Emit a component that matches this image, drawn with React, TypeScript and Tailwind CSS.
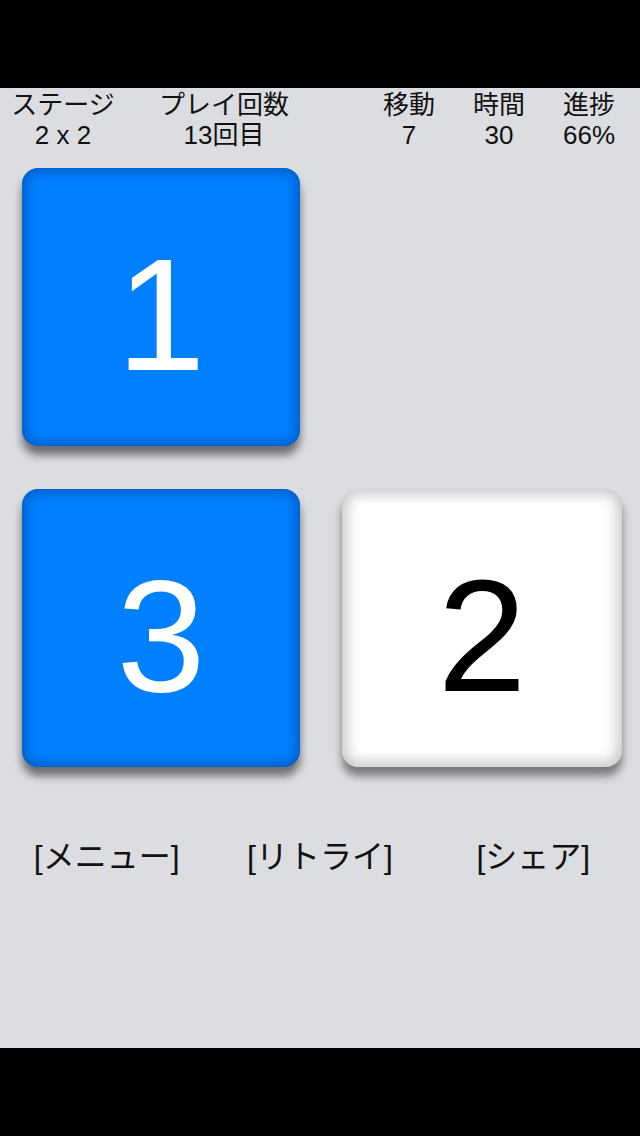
import React from "react";

const font = {
  fontFamily: '"Liberation Sans", "Noto Sans CJK JP", sans-serif',
};

type Stat = { label: string; value: string; width: string };

const stats: Stat[] = [
  { label: "ステージ", value: "2 x 2", width: "w-[126px]" },
  { label: "プレイ回数", value: "13回目", width: "w-[196px]" },
];

const stats2: Stat[] = [
  { label: "移動", value: "7", width: "w-[80px]" },
  { label: "時間", value: "30", width: "w-[80px]" },
  { label: "進捗", value: "66%", width: "w-[80px]" },
];

function StatCol({ s }: { s: Stat }) {
  return (
    <div className={`${s.width} flex flex-col items-center text-[26px] leading-[30px] text-[#111]`}>
      <span>{s.label}</span>
      <span>{s.value}</span>
    </div>
  );
}

function Tile({ n, blue }: { n: number; blue?: boolean }) {
  return (
    <div
      className={
        blue
          ? "w-[278px] h-[278px] rounded-[16px] bg-[#0080ff] text-white flex items-center justify-center pt-4 text-[160px] leading-none shadow-[inset_0_0_12px_4px_rgba(0,40,110,0.4),0_9px_9px_rgba(0,0,0,0.5)]"
          : "w-[280px] h-[278px] rounded-[16px] bg-white text-black flex items-center justify-center pt-4 text-[160px] leading-none shadow-[inset_0_0_14px_5px_rgba(0,0,0,0.22),0_9px_9px_rgba(0,0,0,0.45)]"
      }
    >
      {n}
    </div>
  );
}

export default function App() {
  return (
    <div className="w-[640px] h-[1136px] flex flex-col bg-black" style={font}>
      <div className="h-[88px] bg-black" />
      <main className="flex-1 bg-[#dcdde1] flex flex-col">
        <div className="flex pt-[2px]">
          {stats.map((s) => (
            <StatCol key={s.label} s={s} />
          ))}
          <div className="w-[47px]" />
          <div className="flex gap-[10px]">
            {stats2.map((s) => (
              <StatCol key={s.label} s={s} />
            ))}
          </div>
        </div>

        <div className="mt-[18px] pl-[22px] grid grid-cols-[278px_280px] gap-x-[42px] gap-y-[43px]">
          <Tile n={1} blue />
          <div />
          <Tile n={3} blue />
          <Tile n={2} />
        </div>

        <div className="mt-[70px] grid grid-cols-3 text-[32px] leading-[40px] text-[#111]">
          <button className="text-center">[メニュー]</button>
          <button className="text-center">[リトライ]</button>
          <button className="text-center">[シェア]</button>
        </div>
      </main>
      <div className="h-[88px] bg-black" />
    </div>
  );
}
